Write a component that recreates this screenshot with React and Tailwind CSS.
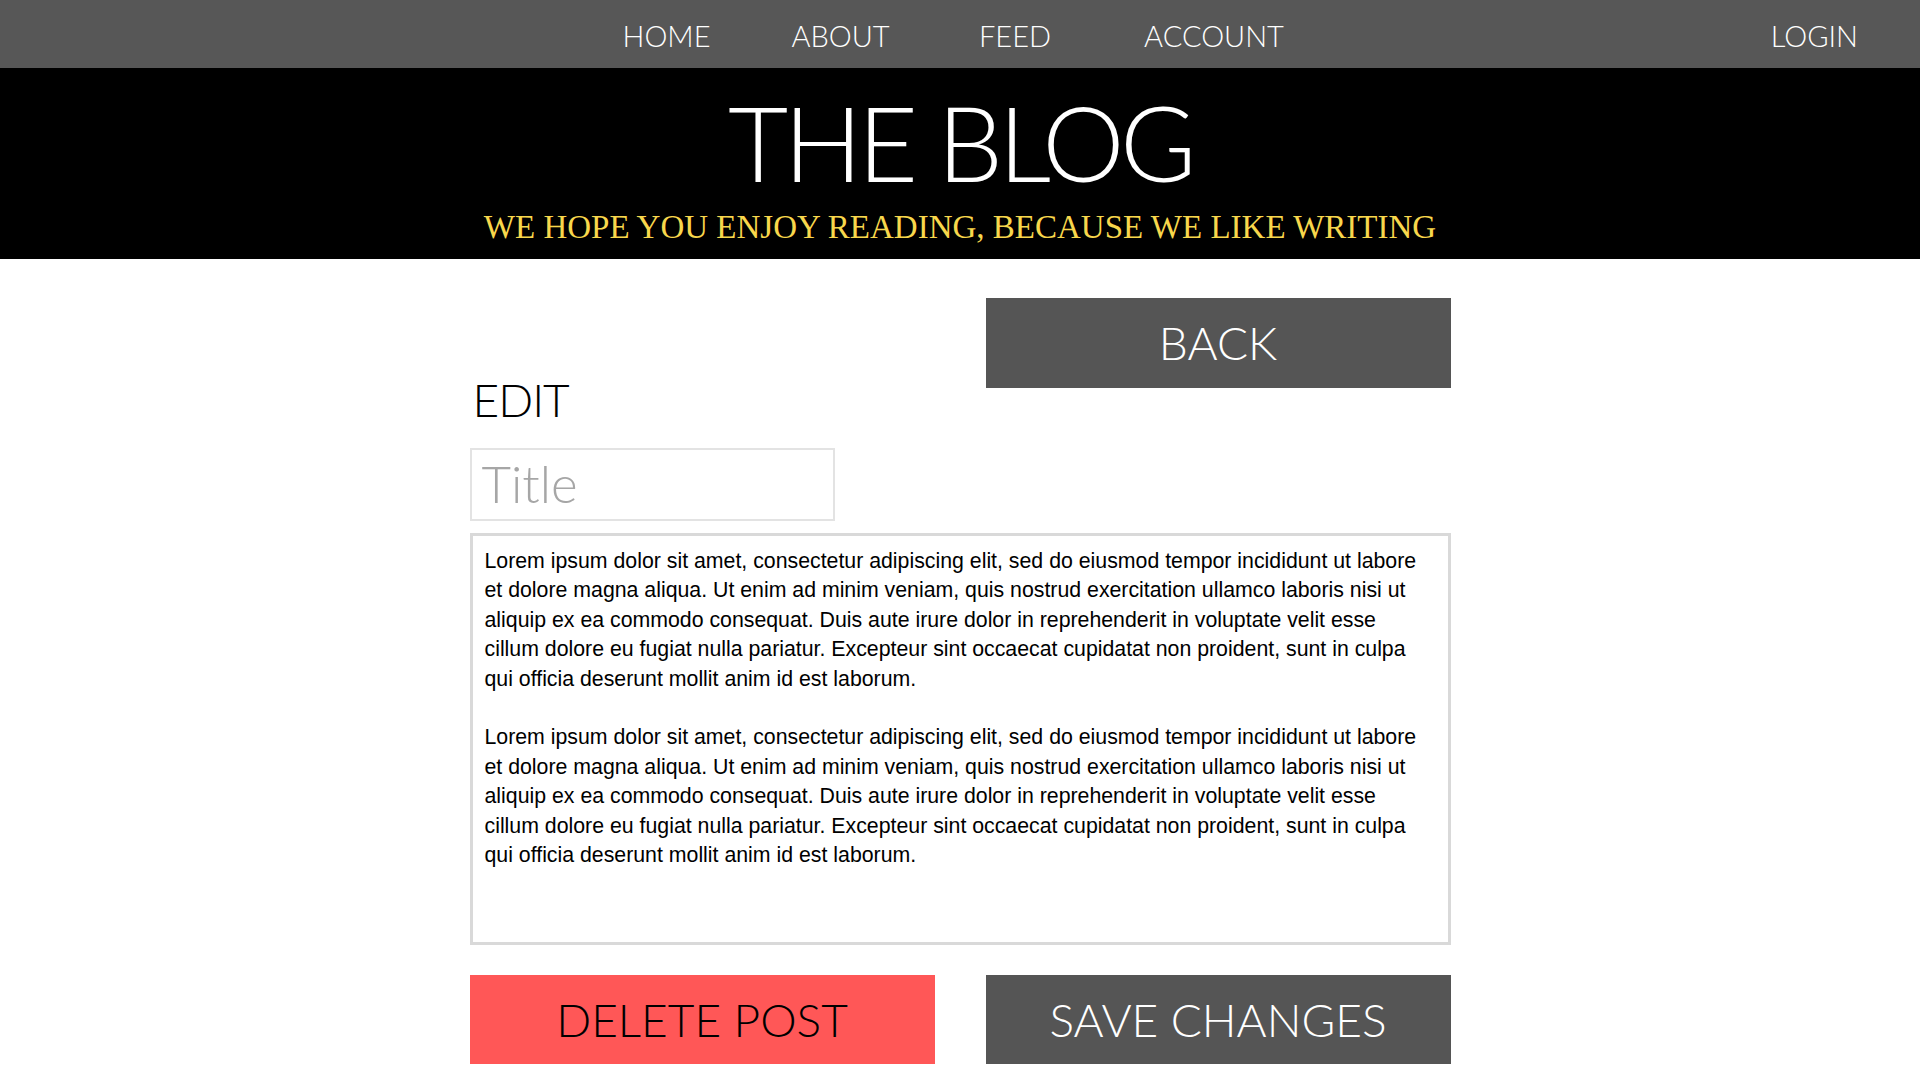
import { useState } from "react";

const BODY =
  "Lorem ipsum dolor sit amet, consectetur adipiscing elit, sed do eiusmod tempor incididunt ut labore et dolore magna aliqua. Ut enim ad minim veniam, quis nostrud exercitation ullamco laboris nisi ut aliquip ex ea commodo consequat. Duis aute irure dolor in reprehenderit in voluptate velit esse cillum dolore eu fugiat nulla pariatur. Excepteur sint occaecat cupidatat non proident, sunt in culpa qui officia deserunt mollit anim id est laborum.";

const navLinks = [
  { label: "HOME", w: "w-[173px]" },
  { label: "ABOUT", w: "w-[175px]" },
  { label: "FEED", w: "w-[174px]" },
  { label: "ACCOUNT", w: "w-[224px]" },
];

const App = () => {
  const [title, setTitle] = useState("");
  const [body, setBody] = useState(BODY + "\n\n" + BODY);

  return (
    <div className="min-h-screen bg-white font-['Lato',sans-serif]">
      {/* nav */}
      <nav className="h-[68px] bg-[#575757] flex items-center pt-[3px] pl-[580px] pr-[62px] text-white text-[29px] font-light">
        {navLinks.map((l) => (
          <a key={l.label} href="#" className={`${l.w} text-center leading-none`}>
            {l.label}
          </a>
        ))}
        <a href="#" className="ml-auto leading-none">
          LOGIN
        </a>
      </nav>

      {/* header */}
      <header className="h-[191px] bg-black flex flex-col items-center pt-[22px]">
        <h1 className="text-white text-[104px] leading-none font-light tracking-[-4.5px]">
          THE BLOG
        </h1>
        <p className="mt-[17px] text-[33px] leading-none text-[#f8d74c] font-['Liberation_Serif',serif]">
          WE HOPE YOU ENJOY READING, BECAUSE WE LIKE WRITING
        </p>
      </header>

      {/* edit form */}
      <main className="w-[981px] mx-auto">
        <div className="flex justify-between">
          <div className="flex flex-col pt-[118px]">
            <h2 className="pl-[3px] text-[46px] leading-none font-light text-black tracking-[-1px]">EDIT</h2>
            <input
              type="text"
              value={title}
              onChange={(e) => setTitle(e.target.value)}
              placeholder="Title"
              className="mt-[25px] w-[365px] h-[73px] border-2 border-[#e3e3e3] pl-[10px] text-[51px] font-light text-black placeholder:text-[#a6a6a6] outline-none"
            />
          </div>
          <button
            type="button"
            className="mt-[39px] w-[465px] h-[90px] bg-[#555555] text-white text-[46px] font-light leading-none"
          >
            BACK
          </button>
        </div>

        <textarea
          value={body}
          onChange={(e) => setBody(e.target.value)}
          className="mt-[12px] block w-full h-[412px] resize-none border-[3px] border-[#d9d9d9] pl-[12px] pr-[16px] pt-[11px] text-[21.3px] leading-[29.4px] text-black font-['Liberation_Sans',Arial,sans-serif] outline-none"
        />

        <div className="mt-[30px] flex justify-between">
          <button
            type="button"
            className="w-[465px] h-[89px] bg-[#ff5757] text-black text-[46px] font-light leading-none"
          >
            DELETE POST
          </button>
          <button
            type="button"
            className="w-[465px] h-[89px] bg-[#555555] text-white text-[46px] font-light leading-none"
          >
            SAVE CHANGES
          </button>
        </div>
      </main>
    </div>
  );
};

export default App;
